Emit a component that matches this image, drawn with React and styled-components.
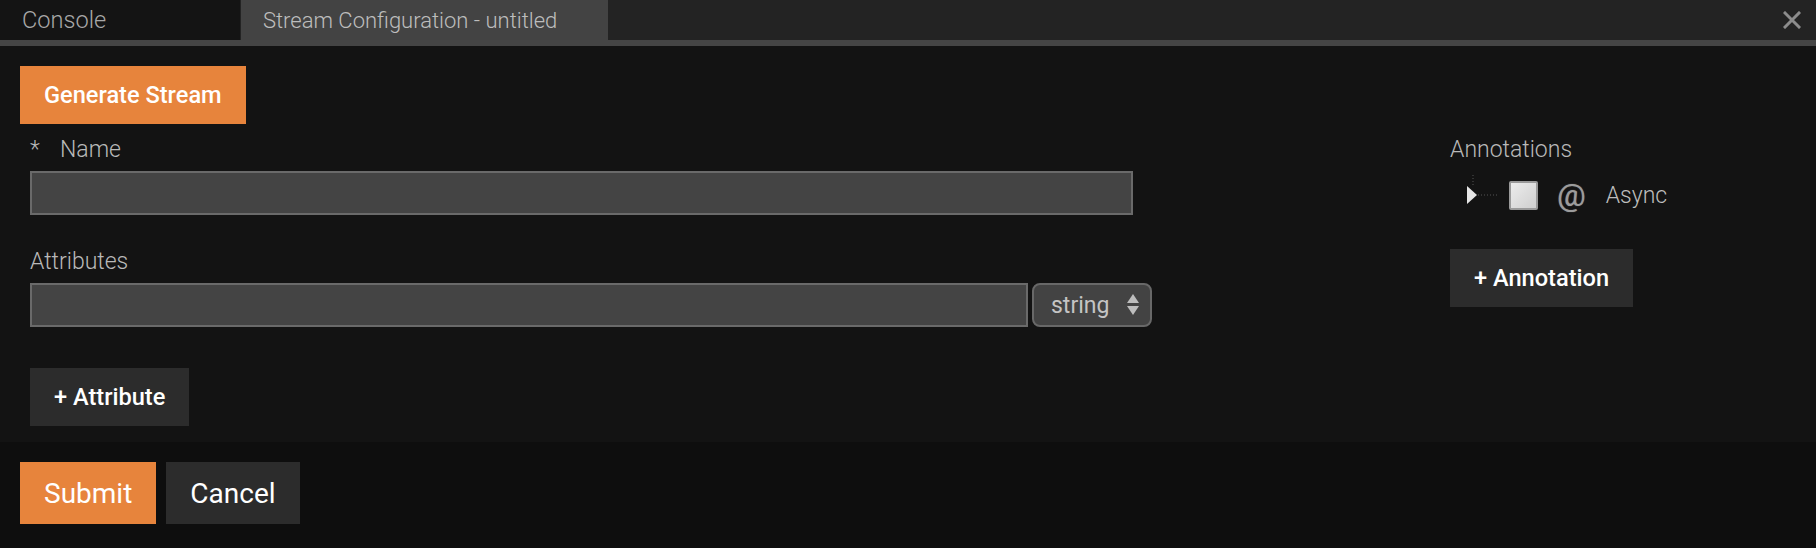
import React from "react"
import styled, { createGlobalStyle } from "styled-components"

const GlobalStyle = createGlobalStyle`
  html, body {
    margin: 0;
    padding: 0;
    background: #131313;
    font-family: Roboto, "Liberation Sans", sans-serif;
  }
  * { box-sizing: border-box; }
`

const Page = styled.div`
  width: 1816px;
  height: 548px;
  display: flex;
  flex-direction: column;
  background: #131313;
  overflow: hidden;
`

const TabBar = styled.div`
  height: 40px;
  display: flex;
  align-items: stretch;
  background: #232323;
`

const Tab = styled.div`
  width: ${props => props.width}px;
  margin-right: 1px;
  padding-left: 22px;
  display: flex;
  align-items: center;
  font-size: ${props => props.size || 22}px;
  font-weight: 300;
  color: ${props => (props.active ? "#bdbdbd" : "#a8a8a8")};
  background: ${props => (props.active ? "#434343" : "#141414")};
  white-space: nowrap;
`

const CloseButton = styled.div`
  margin-left: auto;
  width: 56px;
  display: flex;
  align-items: center;
  justify-content: center;
  padding-left: 8px;
  cursor: pointer;
`

const Strip = styled.div`
  height: 6px;
  background: #454545;
`

const Main = styled.div`
  height: 396px;
  padding: 20px 20px 0;
`

const Columns = styled.div`
  display: flex;
  padding-left: 10px;
`

const LeftColumn = styled.div`
  width: 1420px;
`

const RightColumn = styled.div`
  display: flex;
  flex-direction: column;
  align-items: flex-start;
`

const Label = styled.div`
  font-size: 23px;
  font-weight: 300;
  color: #b9b9b9;
  line-height: 27px;
  margin-top: ${props => props.top || 0}px;
  margin-bottom: 8px;
  white-space: nowrap;
`

const Star = styled.span`
  display: inline-block;
  width: 30px;
`

const TextInput = styled.input`
  display: block;
  width: ${props => props.width}px;
  height: 44px;
  background: #444444;
  border: 2px solid #6a6a6a;
  outline: none;
  color: #ddd;
  font-size: 20px;
  padding: 0 8px;
`

const Row = styled.div`
  display: flex;
  align-items: center;
  gap: 4px;
`

const Select = styled.div`
  width: 120px;
  height: 44px;
  border: 2px solid #686868;
  border-radius: 8px;
  background: #434343;
  display: flex;
  align-items: center;
  justify-content: space-between;
  padding: 0 10px 0 17px;
  font-size: 23px;
  color: #c4c4c4;
`

const Button = styled.button`
  display: block;
  height: ${props => (props.big ? 62 : 58)}px;
  padding: 0 24px;
  border: 0;
  outline: 0;
  font-family: Roboto, "Liberation Sans", sans-serif;
  font-size: ${props => (props.big ? 28 : 23.6)}px;
  font-weight: ${props => (props.big ? 400 : 500)};
  color: #ffffff;
  background: ${props => (props.primary ? "#e7843c" : "#2c2c2c")};
  cursor: pointer;
  white-space: nowrap;
`

const AttributeButton = styled(Button)`
  margin-top: 41px;
`

const TreeRow = styled.div`
  display: flex;
  align-items: center;
  height: 40px;
  margin-left: 12px;
  margin-top: 4px;
`

const Checkbox = styled.span`
  width: 29px;
  height: 29px;
  margin-left: 7px;
  border: 2px solid #9a9a9a;
  border-radius: 2px;
  background: linear-gradient(135deg, #ececec 0%, #cfcfcf 100%);
`

const At = styled.span`
  margin-left: 19px;
  font-size: 32px;
  line-height: 32px;
  color: #9c9c9c;
  text-shadow: 0 0 1px #777;
`

const TreeText = styled.span`
  margin-left: 20px;
  font-size: 23px;
  font-weight: 300;
  color: #bdbdbd;
`

const AnnotationButton = styled(Button)`
  margin-top: 34px;
`

const Footer = styled.div`
  flex: 1;
  background: #0e0e0e;
  padding: 20px;
  display: flex;
  gap: 10px;
  align-items: flex-start;
`

const TreeConnector = () => (
  <svg width="40" height="40" viewBox="0 0 40 40">
    <line x1="11" y1="-6" x2="11" y2="11" stroke="#555" strokeWidth="1" strokeDasharray="1 2" />
    <line x1="16" y1="20" x2="37" y2="20" stroke="#555" strokeWidth="1" strokeDasharray="1 2" />
    <polygon points="5,11 15,20 5,29" fill="#e6e6e6" />
  </svg>
)

const SelectArrows = () => (
  <svg width="14" height="22" viewBox="0 0 14 22">
    <polygon points="7,0 13,9 1,9" fill="#bdbdbd" />
    <polygon points="1,12 13,12 7,21" fill="#bdbdbd" />
  </svg>
)

const CloseIcon = () => (
  <svg width="18" height="18" viewBox="0 0 18 18">
    <path d="M2 2 L16 16 M16 2 L2 16" stroke="#8c8c8c" strokeWidth="3" strokeLinecap="square" />
  </svg>
)

const App = () => (
  <>
    <GlobalStyle />
    <Page>
      <TabBar>
        <Tab width={240} size={23.6}>Console</Tab>
        <Tab width={367} active>Stream Configuration - untitled</Tab>
        <CloseButton><CloseIcon /></CloseButton>
      </TabBar>
      <Strip />
      <Main>
        <Button primary>Generate Stream</Button>
        <Columns>
          <LeftColumn>
            <Label top={12}><Star>*</Star>Name</Label>
            <TextInput width={1103} />
            <Label top={33}>Attributes</Label>
            <Row>
              <TextInput width={998} />
              <Select>
                string
                <SelectArrows />
              </Select>
            </Row>
            <AttributeButton>+ Attribute</AttributeButton>
          </LeftColumn>
          <RightColumn>
            <Label top={12}>Annotations</Label>
            <TreeRow>
              <TreeConnector />
              <Checkbox />
              <At>@</At>
              <TreeText>Async</TreeText>
            </TreeRow>
            <AnnotationButton>+ Annotation</AnnotationButton>
          </RightColumn>
        </Columns>
      </Main>
      <Footer>
        <Button primary big>Submit</Button>
        <Button big>Cancel</Button>
      </Footer>
    </Page>
  </>
)

export default App
